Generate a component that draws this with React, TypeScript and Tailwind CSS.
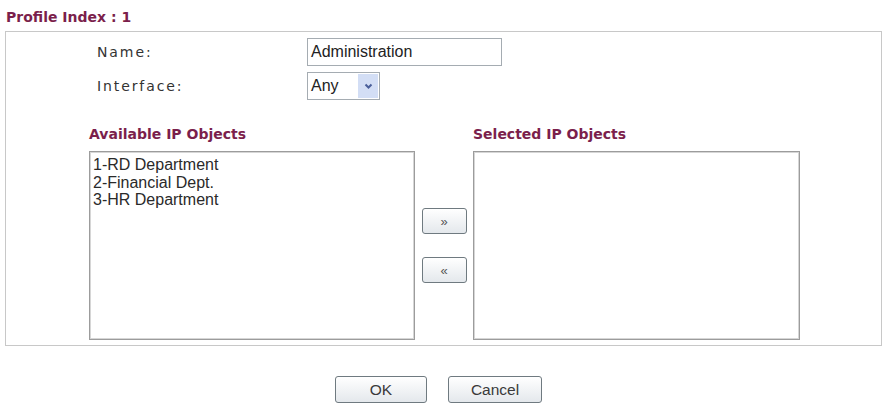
const availableObjects = ['1-RD Department', '2-Financial Dept.', '3-HR Department'];

const heading = "text-[14px] leading-[15px] font-bold text-[#7b1f4c] font-['DejaVu_Sans',sans-serif]";
const label = "h-[28px] flex items-center font-['DejaVu_Sans',sans-serif] text-[14px] tracking-[1.9px] text-[#333]";
const listBox =
  'border border-[#9c9c9c] shadow-[inset_0_0_0_1px_#d6d6d6] bg-white px-[3px] py-[4px] text-[16px] leading-[17.5px] text-[#2a2a2a]';

function MoveButton({ label }: { label: string }) {
  return (
    <button className="w-[45px] h-[26px] rounded-[3px] border-[1.5px] border-[#6f7a80] bg-gradient-to-b from-white to-[#e4e8ec] text-[13px] leading-none text-[#555] flex items-center justify-center">
      {label}
    </button>
  );
}

function FormButton({ label, width }: { label: string; width: string }) {
  return (
    <button
      className={`${width} h-[27px] rounded-[3px] border-[1.5px] border-[#6f7a80] bg-gradient-to-b from-white to-[#e4e8ec] text-[15.5px] leading-none text-[#3a3a3a] font-['Liberation_Sans',sans-serif]`}
    >
      {label}
    </button>
  );
}

export default function App() {
  return (
    <div className="w-[884px] h-[407px] bg-white font-['Liberation_Sans',sans-serif] text-black">
      <div className={`pl-[6px] pt-[10px] h-[31px] ${heading}`}>Profile Index : 1</div>

      <div className="ml-[5px] w-[877px] h-[315px] border border-[#c8c8c8] pt-[6px]">
        <div className="pl-[91px] grid grid-cols-[210px_auto] gap-y-[6px]">
          <div className={label}>Name:</div>
          <div className="h-[28px] w-[195px] border border-[#a5acb2] flex items-center px-[3px] text-[16px] text-[#222]">
            Administration
          </div>
          <div className={label}>Interface:</div>
          <div className="h-[28px] w-[73px] border border-[#a5acb2] flex items-center justify-between pl-[3px] pr-[1px] text-[16px] text-[#222]">
            <span>Any</span>
            <span className="w-[20px] h-[24px] bg-[#d3def5] flex items-center justify-center">
              <svg width="9" height="7" viewBox="0 0 9 7">
                <path d="M1.5 1.5 L4.5 4.5 L7.5 1.5" fill="none" stroke="#4a5f9a" strokeWidth="2" />
              </svg>
            </span>
          </div>
        </div>

        <div className="mt-[27px] pl-[83px] flex">
          <div className="w-[326px]">
            <div className={`${heading} mb-[9px]`}>Available IP Objects</div>
            <div className={`${listBox} h-[189px]`}>
              {availableObjects.map((item) => (
                <div key={item}>{item}</div>
              ))}
            </div>
          </div>

          <div className="w-[58px] pt-[24px] flex flex-col items-center justify-center gap-[23px]">
            <MoveButton label="»" />
            <MoveButton label="«" />
          </div>

          <div className="w-[327px]">
            <div className={`${heading} mb-[9px]`}>Selected IP Objects</div>
            <div className={`${listBox} h-[189px]`} />
          </div>
        </div>
      </div>

      <div className="mt-[30px] flex justify-center gap-[21px] pr-[7px]">
        <FormButton label="OK" width="w-[92px]" />
        <FormButton label="Cancel" width="w-[94px]" />
      </div>
    </div>
  );
}
